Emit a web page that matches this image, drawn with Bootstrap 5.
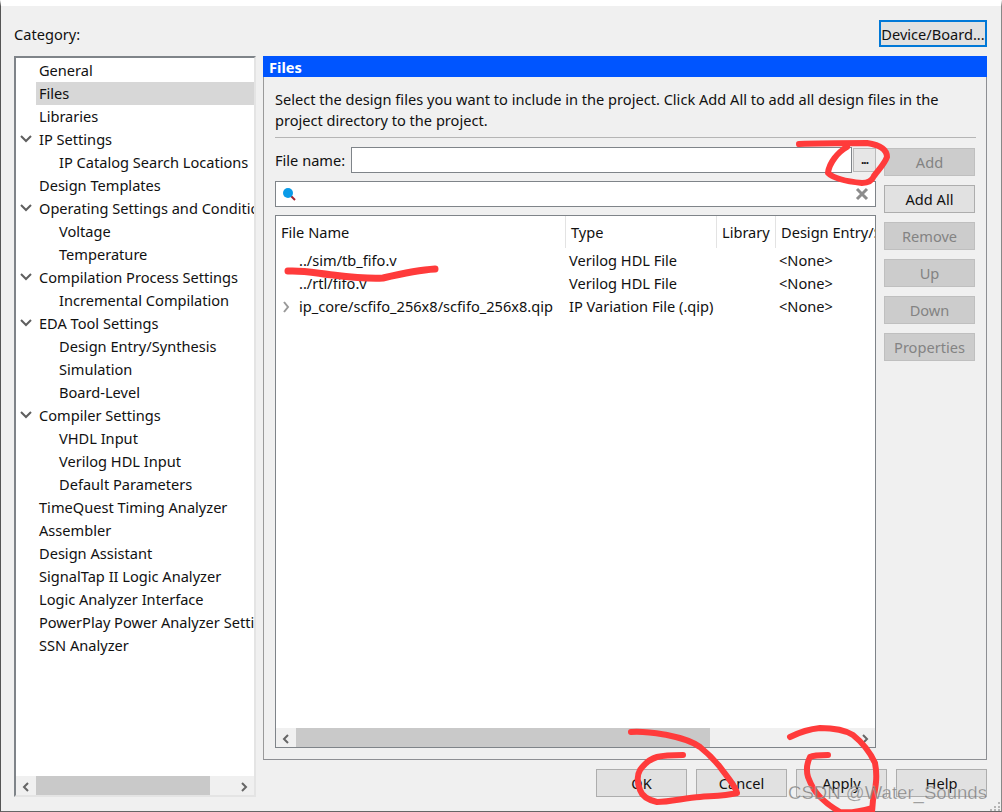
<!DOCTYPE html>
<html lang="en">
  <head>
    <meta charset="UTF-8" />
    <title>Settings - Files</title>
    <link href="https://cdn.jsdelivr.net/npm/bootstrap@5.3.0/dist/css/bootstrap.min.css" rel="stylesheet" />
    <style>
      html, body { height: 812px; overflow: hidden; }
      body {
        background: #f0f0f0;
        color: #111;
        font-family: "Noto Sans", "Liberation Sans", sans-serif;
        font-size: 14.6px;
        line-height: 23px;
      }
      .dlg-window {
        position: relative;
        height: 812px;
        border-left: 1px solid #555;
        border-bottom: 1px solid #666;
        border-right: 1px solid #888;
        border-top: 6px solid #fff;
        padding: 14px 14px 13px 13px;
      }
      .dlg-head { height: 36px; }
      .cat-label { padding-top: 3px; }
      .dlg-btn {
        --bs-btn-padding-x: 0;
        --bs-btn-padding-y: 0;
        --bs-btn-font-size: 14.6px;
        --bs-btn-line-height: 24px;
        --bs-btn-border-radius: 0;
        --bs-btn-color: #111;
        --bs-btn-bg: #e1e1e1;
        --bs-btn-border-color: #adadad;
        --bs-btn-hover-color: #111;
        --bs-btn-hover-bg: #e1e1e1;
        --bs-btn-hover-border-color: #adadad;
        --bs-btn-disabled-color: #838383;
        --bs-btn-disabled-bg: #cccccc;
        --bs-btn-disabled-border-color: #bfbfbf;
        --bs-btn-disabled-opacity: 1;
        width: 91px;
        height: 28px;
      }
      .device-btn { width: 108px; height: 27px; border: 2px solid #0078d7; line-height: 22px; white-space: nowrap; }
      .dlg-body { height: 741px; }
      .tree-col { width: 242px; flex: none; }
      .sunken {
        background: #fff;
        border: 1px solid #7f8489;
      }
      .tree-box {
        border-width: 2px;
        border-color: #7f8489 #e4e4e4 #e4e4e4 #7f8489;
        height: 741px;
        overflow: hidden;
      }
      .tree-list { height: 718px; padding: 1px 0 0; margin: 0; list-style: none; overflow: hidden; }
      .tree-item { height: 23px; padding-left: 23px; white-space: nowrap; overflow: hidden; position: relative; }
      .tree-item.lvl2 { padding-left: 43px; }
      .tree-item.sel { margin-left: 20px; padding-left: 3px; background: #d7d7d7; }
      .tree-item svg { position: absolute; left: 4px; top: 6px; }
      .hbar { height: 19px; background: #f0f0f0; }
      .hbar-arrow { width: 20px; flex: none; }
      .hbar-thumb { background: #c9c9c9; height: 19px; }
      .right-col { width: 724px; flex: none; margin-left: 7px; }
      .files-panel { height: 683px; border: 1px solid #8d8f93; border-left-color: #9a9a9a; border-top: 0; }
      .files-title {
        height: 21px;
        background: #0055ff;
        color: #fff;
        font-weight: 700;
        line-height: 23px;
        padding-left: 6px;
      }
      .files-inner { padding: 12px 11px 0 11px; }
      .intro { line-height: 21px; margin: 0; border-bottom: 1px solid #b5b5b5; width: 701px; padding-bottom: 6px; box-sizing: content-box; height: 42px; }
      .name-row { margin-top: 9px; height: 26px; }
      .name-input { width: 501px; height: 26px; margin-left: 6px; }
      .browse-btn { width: 23px; height: 24px; margin-left: 1px; background: #e6e6e6; border: 1px solid #b9b9b9; font-size: 12px; line-height: 22px; letter-spacing: -1px; text-align: center; font-weight: 700; }
      .search-box { width: 601px; height: 26px; margin-top: 8px; padding: 0 6px; }
      .table-box { width: 601px; height: 533px; margin-top: 8px; }
      .cols { height: 32px; }
      .col-a { width: 290px; padding-left: 5px; }
      .col-b { width: 151px; padding-left: 5px; }
      .col-c { width: 59px; padding-left: 5px; }
      .col-d { width: 99px; padding-left: 5px; overflow: hidden; white-space: nowrap; }
      .cols > div { height: 32px; line-height: 33px; border-right: 1px solid #e3e3e3; }
      .cols > div:last-child { border-right: 0; }
      .file-rows { height: 480px; padding-top: 1px; }
      .file-row { height: 23px; white-space: nowrap; }
      .file-row > div { height: 23px; }
      .cell-a { width: 293px; padding-left: 23px; position: relative; }
      .cell-a svg { position: absolute; left: 6px; top: 6px; }
      .cell-b { width: 151px; }
      .cell-c { width: 59px; }
      .side-btns { margin-left: 8px; gap: 9px; padding-top: 10px; }
      .foot-btns { height: 37px; gap: 9px; padding-top: 9px; }
      .foot-btns .dlg-btn { height: 28px; }
      .scribble { position: absolute; left: -1px; top: -6px; width: 1002px; height: 812px; pointer-events: none; }
      .scribble path { fill: none; stroke: #ff3b3b; stroke-width: 6; stroke-linecap: round; stroke-linejoin: round; }
      .scribble path.fat { stroke-width: 7; }
      .watermark {
        position: absolute;
        right: 14px;
        bottom: 6px;
        font-family: "Liberation Sans", sans-serif;
        font-size: 18.6px;
        line-height: 24px;
        color: rgba(110, 110, 110, .75);
        -webkit-text-stroke: .4px rgba(255,255,255,.5);
        white-space: nowrap;
      }
      .grip { position: absolute; right: 0; bottom: 0; }
    </style>
  </head>
  <body>
    <div class="dlg-window">
      <div class="dlg-head d-flex justify-content-between">
        <div class="cat-label">Category:</div>
        <button class="btn dlg-btn device-btn" type="button">Device/Board...</button>
      </div>

      <div class="dlg-body d-flex">
        <!-- category tree -->
        <div class="tree-col">
          <div class="sunken tree-box d-flex flex-column">
            <ul class="tree-list" id="tree"></ul>
            <div class="hbar d-flex align-items-center">
              <div class="hbar-arrow text-center"><svg width="10" height="12" viewBox="0 0 10 12"><path d="M7 2L3 6l4 4" fill="none" stroke="#666" stroke-width="2"/></svg></div>
              <div class="hbar-thumb" style="width: 174px"></div>
              <div class="flex-grow-1"></div>
              <div class="hbar-arrow text-center"><svg width="10" height="12" viewBox="0 0 10 12"><path d="M3 2l4 4-4 4" fill="none" stroke="#666" stroke-width="2"/></svg></div>
            </div>
          </div>
        </div>

        <div class="right-col">
          <div class="files-title">Files</div>
          <div class="files-panel">
            <div class="files-inner d-flex flex-column">
              <p class="intro">Select the design files you want to include in the project. Click Add All to add all design files in the project directory to the project.</p>
              <div class="d-flex">
                <div>
                  <div class="name-row d-flex align-items-center">
                    <span>File name:</span>
                    <div class="sunken name-input"></div>
                    <div class="browse-btn">...</div>
                  </div>
                  <div class="sunken search-box d-flex align-items-center justify-content-between">
                    <svg width="14" height="14" viewBox="0 0 14 14"><path d="M9 9l4 4" stroke="#a3232c" stroke-width="2"/><circle cx="6" cy="6" r="5" fill="#0a9be8"/></svg>
                    <svg width="14" height="14" viewBox="0 0 14 14"><path d="M2 2l10 10M12 2L2 12" stroke="#8c8c8c" stroke-width="3"/></svg>
                  </div>
                  <div class="sunken table-box d-flex flex-column">
                    <div class="cols d-flex">
                      <div class="col-a">File Name</div>
                      <div class="col-b">Type</div>
                      <div class="col-c">Library</div>
                      <div class="col-d">Design Entry/Synthesis</div>
                    </div>
                    <div class="file-rows" id="rows"></div>
                    <div class="hbar d-flex align-items-center">
                      <div class="hbar-arrow text-center"><svg width="10" height="12" viewBox="0 0 10 12"><path d="M7 2L3 6l4 4" fill="none" stroke="#666" stroke-width="2"/></svg></div>
                      <div class="hbar-thumb" style="width: 414px"></div>
                      <div class="flex-grow-1"></div>
                      <div class="hbar-arrow text-center"><svg width="10" height="12" viewBox="0 0 10 12"><path d="M3 2l4 4-4 4" fill="none" stroke="#666" stroke-width="2"/></svg></div>
                    </div>
                  </div>
                </div>
                <div class="side-btns d-flex flex-column">
                  <button class="btn dlg-btn" type="button" disabled>Add</button>
                  <button class="btn dlg-btn" type="button">Add All</button>
                  <button class="btn dlg-btn" type="button" disabled>Remove</button>
                  <button class="btn dlg-btn" type="button" disabled>Up</button>
                  <button class="btn dlg-btn" type="button" disabled>Down</button>
                  <button class="btn dlg-btn" type="button" disabled>Properties</button>
                </div>
              </div>
            </div>
          </div>
          <div class="foot-btns d-flex justify-content-end">
            <button class="btn dlg-btn" type="button">OK</button>
            <button class="btn dlg-btn" type="button">Cancel</button>
            <button class="btn dlg-btn" type="button">Apply</button>
            <button class="btn dlg-btn" type="button">Help</button>
          </div>
        </div>
      </div>

      <!-- red pen marks drawn on top of the screenshot -->
      <svg class="scribble" viewBox="0 0 1002 812">
        <path d="M799 144C820 143 850 143 867 143C880 145 887 150 887 157C884 165 878 170 874 176C872 181 868 183 862 183C852 182 835 180 828 173C829 163 838 152 847 147"/>
        <path class="fat" d="M288 271C305 270 320 274 333 275C350 277 368 279 383 278C400 274 418 270 435 269"/>
        <path d="M631 732C645 731 655 733 667 735C682 738 692 741 700 747C710 755 716 762 720 767C728 778 735 785 737 793C725 796 712 796 700 797C685 798 670 802 657 802C648 800 642 796 640 790C637 782 637 775 640 770C645 763 650 759 657 757C665 755 675 755 683 755"/>
        <path d="M790 737C800 732 810 729 820 728C833 728 845 730 853 735C863 743 870 752 875 763C878 778 875 790 873 800L872 812"/>
        <path d="M828 755C820 755 814 755 810 757C807 763 806 770 808 777C811 785 815 792 820 797C827 804 833 808 840 812C850 813 862 811 872 808"/>
      </svg>
      <div class="watermark">CSDN @Water_Sounds</div>
      <svg class="grip" width="12" height="10" viewBox="0 0 12 10"><path d="M9 1h2v2H9zM5 5h2v2H5zM9 5h2v2H9zM1 8h2v2H1zM5 8h2v2H5zM9 8h2v2H9z" fill="#b5b5b5"/></svg>
    </div>

    <script>
      // category tree: [label, level, has children, selected]
      const chevron = '<svg width="12" height="10" viewBox="0 0 12 10"><path d="M1 2l5 5 5-5" fill="none" stroke="#5f5f5f" stroke-width="2"/></svg>';
      const treeItems = [
        ["General", 1], ["Files", 1, 0, 1], ["Libraries", 1], ["IP Settings", 1, 1],
        ["IP Catalog Search Locations", 2], ["Design Templates", 1],
        ["Operating Settings and Conditions", 1, 1], ["Voltage", 2], ["Temperature", 2],
        ["Compilation Process Settings", 1, 1], ["Incremental Compilation", 2],
        ["EDA Tool Settings", 1, 1], ["Design Entry/Synthesis", 2], ["Simulation", 2], ["Board-Level", 2],
        ["Compiler Settings", 1, 1], ["VHDL Input", 2], ["Verilog HDL Input", 2], ["Default Parameters", 2],
        ["TimeQuest Timing Analyzer", 1], ["Assembler", 1], ["Design Assistant", 1],
        ["SignalTap II Logic Analyzer", 1], ["Logic Analyzer Interface", 1],
        ["PowerPlay Power Analyzer Settings", 1], ["SSN Analyzer", 1]
      ];
      document.getElementById("tree").innerHTML = treeItems.map(([t, l, c, s]) =>
        `<li class="tree-item${l == 2 ? " lvl2" : ""}${s ? " sel" : ""}">${c ? chevron : ""}${t}</li>`).join("");

      const fileRows = [
        ["../sim/tb_fifo.v", "Verilog HDL File"],
        ["../rtl/fifo.v", "Verilog HDL File"],
        ["ip_core/scfifo_256x8/scfifo_256x8.qip", "IP Variation File (.qip)", 1]
      ];
      const arrow = '<svg width="8" height="12" viewBox="0 0 8 12"><path d="M2 1l4 5-4 5" fill="none" stroke="#999" stroke-width="2"/></svg>';
      document.getElementById("rows").innerHTML = fileRows.map(([n, t, c]) =>
        `<div class="file-row d-flex"><div class="cell-a">${c ? arrow : ""}${n}</div><div class="cell-b">${t}</div><div class="cell-c"></div><div>&lt;None&gt;</div></div>`).join("");
    </script>
    <script src="https://cdn.jsdelivr.net/npm/bootstrap@5.3.0/dist/js/bootstrap.bundle.min.js"></script>
  </body>
</html>
